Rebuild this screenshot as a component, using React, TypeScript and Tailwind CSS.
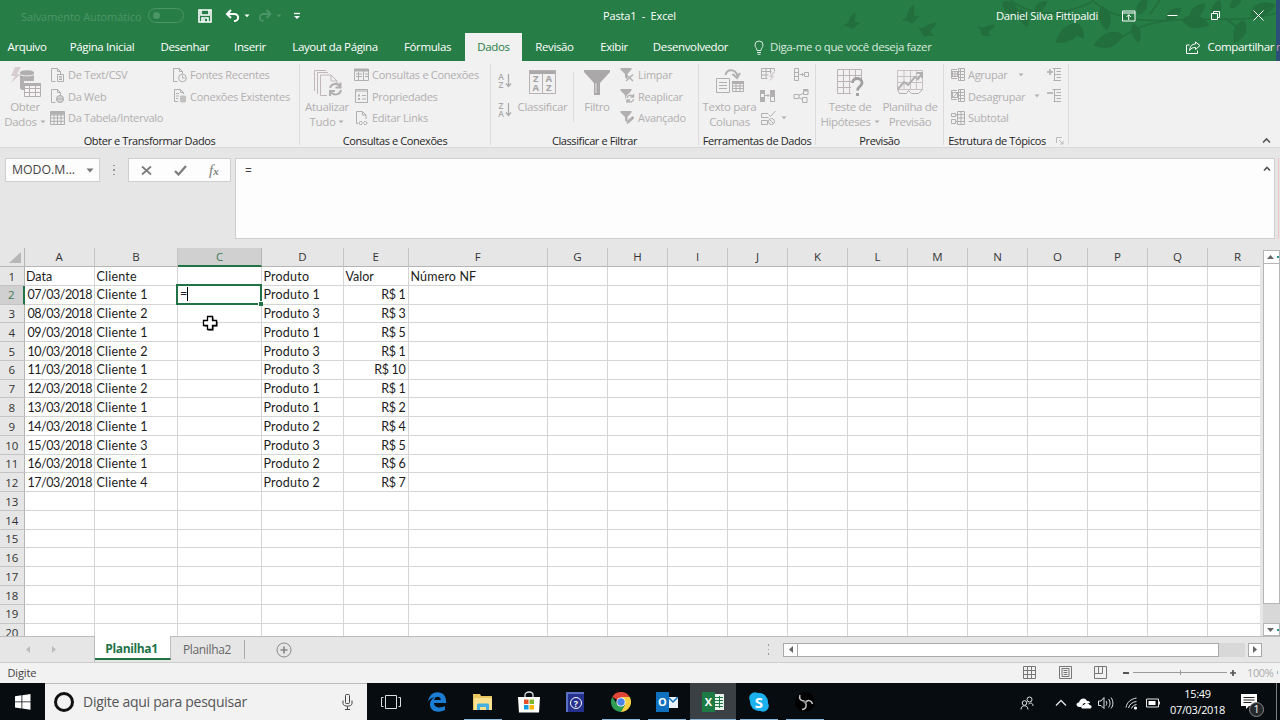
import React from 'react';
import clsx from 'clsx';

const TABS = [
  { label: 'Arquivo', width: 'w-[54px]' },
  { label: 'Página Inicial', width: 'w-[96px]' },
  { label: 'Desenhar', width: 'w-[70px]' },
  { label: 'Inserir', width: 'w-[60px]' },
  { label: 'Layout da Página', width: 'w-[110px]' },
  { label: 'Fórmulas', width: 'w-[75px]' },
  { label: 'Dados', width: 'w-[57px]', active: true },
  { label: 'Revisão', width: 'w-[65px]' },
  { label: 'Exibir', width: 'w-[54px]' },
  { label: 'Desenvolvedor', width: 'w-[99px]' },
];

const COLUMNS = [
  { name: 'A', width: 70.5 },
  { name: 'B', width: 83 },
  { name: 'C', width: 84 },
  { name: 'D', width: 82 },
  { name: 'E', width: 64.5 },
  { name: 'F', width: 139.5 },
  ...['G', 'H', 'I', 'J', 'K', 'L', 'M', 'N', 'O', 'P', 'Q'].map((name) => ({ name, width: 60 })),
  { name: 'R', width: 60 },
];

const DATA: string[][] = [
  ['Data', 'Cliente', '', 'Produto', 'Valor', 'Número NF'],
  ['07/03/2018', 'Cliente 1', '=', 'Produto 1', 'R$ 1'],
  ['08/03/2018', 'Cliente 2', '', 'Produto 3', 'R$ 3'],
  ['09/03/2018', 'Cliente 1', '', 'Produto 1', 'R$ 5'],
  ['10/03/2018', 'Cliente 2', '', 'Produto 3', 'R$ 1'],
  ['11/03/2018', 'Cliente 1', '', 'Produto 3', 'R$ 10'],
  ['12/03/2018', 'Cliente 2', '', 'Produto 1', 'R$ 1'],
  ['13/03/2018', 'Cliente 1', '', 'Produto 1', 'R$ 2'],
  ['14/03/2018', 'Cliente 1', '', 'Produto 2', 'R$ 4'],
  ['15/03/2018', 'Cliente 3', '', 'Produto 3', 'R$ 5'],
  ['16/03/2018', 'Cliente 1', '', 'Produto 2', 'R$ 6'],
  ['17/03/2018', 'Cliente 4', '', 'Produto 2', 'R$ 7'],
];

const ROWS = Array.from({ length: 20 }, (_, i) => i);

interface IconProps {
  w?: number;
  h?: number;
  className?: string;
  children: React.ReactNode;
}

function Icon({ w = 16, h = 16, className, children }: IconProps) {
  return (
    <svg
      width={w}
      height={h}
      viewBox={`0 0 ${w} ${h}`}
      fill="none"
      stroke="currentColor"
      strokeWidth="1"
      className={clsx('shrink-0', className)}
    >
      {children}
    </svg>
  );
}

function Caret({ className }: { className?: string }) {
  return (
    <Icon w={6} h={4} className={className}>
      <path d="M.5 .5h5L3 3.2z" fill="currentColor" stroke="none" />
    </Icon>
  );
}

/* ---------- small ribbon icons ---------- */

const page = 'M5.5 14.5H1.5V1.5h6l3 3V7M7.5 1.5v3h3';

const CsvIcon = () => (
  <Icon>
    <path d={page} />
    <path d="M7.5 7.5h6v7h-6zM9 9.5h3M9 11h3M9 12.5h3" />
  </Icon>
);
const WebIcon = () => (
  <Icon>
    <path d={page} />
    <circle cx="10" cy="11" r="3.6" />
    <path d="M6.5 11h7M10 7.5v7M8.3 8c-.8 2-.8 4 0 6M11.7 8c.8 2 .8 4 0 6" />
  </Icon>
);
const TableIcon = () => (
  <Icon>
    <path d="M.5 1.5h14v13H.5zM.5 5h14M.5 8h14M.5 11.3h14M4 4v10.5M7.5 4v10.5M11 4v10.5" />
    <path d="M.5 2h14v2H.5z" fill="currentColor" />
  </Icon>
);
const RecentIcon = () => (
  <Icon>
    <path d={page} />
    <circle cx="10.5" cy="11" r="3.8" />
    <path d="M10.5 8.5V11h2.2" />
  </Icon>
);
const ConnectionsIcon = () => (
  <Icon>
    <path d="M6 13.5H2.5v-12h6l3 3V6M8.5 1.5v3h3M4 5.5h3M4 8h3M4 10.5h2" />
    <path d="M8 8.5c0-1.3 6-1.3 6 0v5c0 1.3-6 1.3-6 0z" fill="currentColor" stroke="none" opacity=".75" />
  </Icon>
);
const QueriesIcon = () => (
  <Icon>
    <path d="M.5 2.5h14v11H.5zM9.5 4v9.5M2 7h6M2 9.5h6M4.5 5v8M11 7h3M11 9.5h3" />
    <path d="M.5 2h14v2H.5z" fill="currentColor" />
  </Icon>
);
const PropsIcon = () => (
  <Icon>
    <path d="M1.5 1.5h12v13h-12zM1.5 3h12M8 7.5h4M8 11h4" />
    <path d="M4 6.5h2v2H4zM4 10h2v2H4z" fill="currentColor" stroke="none" />
  </Icon>
);
const LinksIcon = () => (
  <Icon>
    <path d="M4 13.5H2.5v-12h6l3.5 3.5V9M8.5 1.5v3.5H12" />
    <path d="M8 11.5H6.5a1.5 1.5 0 0 0 0 3H8M10 14.5h1.5a1.5 1.5 0 0 0 0-3H10M7.5 13h3" />
  </Icon>
);

const smallFunnel = <path d="M.5 1h11v1.5L7.5 7v5.5L5 10.5V7L.5 2.5z" fill="currentColor" stroke="none" />;

const ClearIcon = () => (
  <Icon>
    {smallFunnel}
    <path d="M6 7.5l7 6.5M13 7.5L6 14" strokeWidth="1.4" />
  </Icon>
);
const ReapplyIcon = () => (
  <Icon>
    {smallFunnel}
    <circle cx="10.3" cy="10.5" r="4.7" fill="#f1f1f1" stroke="none" />
    <path d="M7 10a3.4 3.4 0 0 1 6-1.5M13.5 6v3h-3M13.6 11a3.4 3.4 0 0 1-6 1.8M7 15v-3h3" strokeWidth="1.3" />
  </Icon>
);
const AdvancedIcon = () => (
  <Icon>
    {smallFunnel}
    <path d="M7 13.5l1-3 4.5-4 1.5 1.5-4.5 4z" fill="currentColor" />
  </Icon>
);

const SortIcon = ({ desc = false }: { desc?: boolean }) => (
  <div className="flex items-center text-[#a9a7a7]">
    <div className="flex w-[7px] flex-col text-center text-[8.5px] leading-[8px] font-semibold">
      <span>{desc ? 'Z' : 'A'}</span>
      <span>{desc ? 'A' : 'Z'}</span>
    </div>
    <Icon w={7} h={14}>
      <path d="M3.5 0v12M1 9.5l2.5 3 2.5-3" strokeWidth="1.2" />
    </Icon>
  </div>
);

const FlashFillIcon = () => (
  <Icon>
    <path d="M1.5 1.5h13v3M1.5 1.5v10h6M1.5 4.5h10M1.5 8h7M6 1.5v10M10.5 1.5v5" />
    <path d="M13 5l-4 5h2.5L9 15l5.5-6H12l3-4z" fill="#d2cdcf" stroke="none" />
  </Icon>
);
const DuplicatesIcon = () => (
  <Icon>
    <path d="M.5 2.5h4v11h-4zM10.5 2.5h4v11h-4z" />
    <path d="M.5 2.5h4v3h-4zM.5 9.5h4v4h-4zM10.5 2.5h4v6h-4z" fill="currentColor" />
    <path d="M5 7.5h4M7.5 6L9 7.5 7.5 9" />
  </Icon>
);
const ValidationIcon = () => (
  <Icon>
    <path d="M8 3.5H1.5v4h7M1.5 10.5h6v4h-6zM8.5 4.5l2 2 5-5.5" />
    <circle cx="11.5" cy="11.5" r="3" />
    <path d="M9.5 9.5l4 4" />
  </Icon>
);
const ConsolidateIcon = () => (
  <Icon>
    <path d="M1.5 1.5h4v12h-4zM1.5 5.5h4M1.5 9.5h4M11.5 5.5h4v4h-4zM6.5 7.5h4M9 6l1.5 1.5L9 9" />
  </Icon>
);
const RelationsIcon = () => (
  <Icon>
    <path d="M1 6.5h5v4H1zM10.5 1.5h4.5v5h-4.5zM9.5 9.5H14v5H9.5zM6 7.5l4.5-2.5M6 9.5l3.5 2" />
    <path d="M10.5 2.5H15" strokeWidth="1.8" />
  </Icon>
);

const GroupIcon = ({ cut = false }: { cut?: boolean }) => (
  <Icon>
    <path d="M8.5 1.5h6v12h-6zM8.5 4.5h6M8.5 7.5h6M8.5 10.5h6M10.5 1.5v12M7 2.5H1.5v9H7" />
    {cut ? <path d="M2.5 10l6-6.5" /> : <path d="M3 7h4M5 5v4" />}
    <rect x="2.5" y="4.5" width="5" height="5" />
  </Icon>
);
const SubtotalIcon = () => (
  <Icon>
    <path d="M7.5 1.5h7v13h-7zM7.5 4.5h7M7.5 8h7M7.5 11.5h7M11 1.5v13M1.5 3.5h4v3h-4zM1.5 9.5h4v4h-4zM5.5 5h2M5.5 11.5h2" />
  </Icon>
);
const DetailIcon = ({ minus = false }: { minus?: boolean }) => (
  <Icon>
    <path d="M7.5 2v11M5.5 1.5H14M9.5 4.5H14M7.5 7.5H14M9.5 10.5H14M6.5 13.5H14" />
    <path d="M0 5h6" strokeWidth="1.6" />
    {!minus && <path d="M3 2v6" strokeWidth="1.6" />}
  </Icon>
);

/* ---------- large ribbon icons ---------- */

const GetDataIcon = () => (
  <Icon w={32} h={32}>
    <path d="M6 1h6L8 8h4L2 17l4-7H2z" fill="#d8cdd0" stroke="none" />
    <path d="M11 6.5c0-3 14-3 14 0V15H15v9c-2 0-4-.6-4-2z" fill="currentColor" stroke="none" />
    <path d="M11 8.5c2 1.8 12 1.8 14 0" stroke="#f1f1f1" />
    <path d="M15.5 17.5h16v13h-16zM15.5 22.5h16M15.5 26.5h16M20.5 18v12.5M26.5 18v12.5" fill="#f7f3f5" />
    <path d="M15 17h17v3H15z" fill="currentColor" stroke="none" />
  </Icon>
);
const RefreshAllIcon = () => (
  <Icon w={32} h={32}>
    <path d="M3.5 25V4.5H15M6.5 28V6.5H17M16 29.5H9.5V9H20l6 6v3M20 9v6h6" stroke="#c2b8bb" />
    <path d="M19 22a5.5 5.5 0 0 1 10-1.5M29.5 16.5v5h-5M30 24a5.5 5.5 0 0 1-10 2M19 30v-5h5" strokeWidth="2" />
  </Icon>
);
const SortDialogIcon = () => (
  <div className="flex h-[24px] w-[27px] flex-col border border-[#b9b1b3] text-[#a5a3a4]">
    <div className="h-[3px] bg-[#aaa8a9]" />
    <div className="grid grow grid-cols-2 divide-x divide-[#b9b1b3] text-center text-[9.5px] leading-[9.5px] font-bold">
      <span>
        Z<br />A
      </span>
      <span>
        A<br />Z
      </span>
    </div>
  </div>
);
const FunnelIcon = () => (
  <Icon w={28} h={28}>
    <path d="M1 2h26v2L17 15v12h-6V15L1 4z" fill="#aaa8a8" stroke="none" />
    <path d="M13 15v10" stroke="#e6e4e4" />
  </Icon>
);
const TextColumnsIcon = () => (
  <Icon w={30} h={28}>
    <path d="M1.5 10.5h13v14h-13zM4 14.5h8M4 17.5h8M4 20.5h8" />
    <path d="M17.5 13.5h11v10h-11zM17.5 18h11M17.5 20.5h11M21 16v7M25 16v7" />
    <path d="M17 13h12v3H17z" fill="currentColor" stroke="none" />
    <path d="M10.5 7c1-6 10-7 12 1M17.5 6l4.5 4 3-5" strokeWidth="2" />
  </Icon>
);
const WhatIfIcon = () => (
  <Icon w={28} h={30}>
    <path
      d="M1.5 2.5h24v24h-24zM1.5 8.5h24M1.5 14.5h24M1.5 20.5h24M7.5 2.5v24M13.5 2.5v24M19.5 2.5v24"
      stroke="#bcb4b6"
    />
    <path d="M15 13h13v16H15z" fill="#f1f1f1" stroke="none" />
    <path d="M16.5 16c0-6 9.5-6 9.5 0 0 3.5-4.5 3.5-4.5 7.5M21.5 26v3" strokeWidth="2.8" stroke="#a19fa0" />
  </Icon>
);
const ForecastIcon = () => (
  <Icon w={28} h={28}>
    <path d="M1.5 2.5h25v19h-25zM1.5 8.5h25M1.5 14.5h25M8 2.5v19M14.5 2.5v19M20.5 2.5v19" stroke="#c9c0c3" />
    <path d="M2 21l6-7 4 3 7-8 3 2 4-6M21 5h5v5" strokeWidth="2" />
    <path d="M1.5 21.5l2 4h7l2-3 3 3h7l4-4" />
  </Icon>
);

/* ---------- ribbon pieces ---------- */

function RibbonGroup({
  label,
  className,
  launcher,
  children,
}: {
  label: string;
  className: string;
  launcher?: boolean;
  children: React.ReactNode;
}) {
  return (
    <div className={clsx('flex shrink-0 pt-[3px]', className)}>
      <div className="flex min-w-0 grow flex-col">
        <div className="flex h-[69px]">{children}</div>
        <div className="flex h-[14px] items-end justify-center text-[11px] leading-[13px] tracking-[-0.4px] whitespace-nowrap text-[#262626]">
          <span>{label}</span>
          {launcher && (
            <Icon w={8} h={8} className="mb-[2px] ml-2.5 text-[#bbb]">
              <path d="M.5 6V.5H6M3 3l4 4M7 4v3H4" />
            </Icon>
          )}
        </div>
      </div>
      <div className="mb-[2px] w-px bg-[#dcdada]" />
    </div>
  );
}

function BigButton({
  icon,
  lines,
  caret,
  className,
}: {
  icon: React.ReactNode;
  lines: string[];
  caret?: boolean;
  className: string;
}) {
  return (
    <div className={clsx('flex shrink-0 flex-col items-center', className)}>
      <div className="flex h-[35px] items-center justify-center">{icon}</div>
      {lines.map((line, i) => (
        <div
          key={line}
          className="flex h-[15px] items-center gap-[3px] text-[11.5px] leading-none tracking-[-0.35px] whitespace-nowrap"
        >
          {line}
          {caret && i === lines.length - 1 && <Caret />}
        </div>
      ))}
    </div>
  );
}

function SmallButton({ icon, label, caret }: { icon: React.ReactNode; label?: string; caret?: string }) {
  return (
    <div className="flex h-[21.5px] items-center gap-[2px] text-[11px] leading-none tracking-[-0.28px] whitespace-nowrap">
      {icon}
      {label}
      {caret !== undefined && <Caret className={caret} />}
    </div>
  );
}

function Ribbon() {
  return (
    <div className="flex h-[87px] shrink-0 border-b border-[#d8d8d8] bg-[#f1f1f1] text-[#b1afb0]">
      <RibbonGroup label="Obter e Transformar Dados" className="w-[300px]">
        <BigButton className="w-[50px]" icon={<GetDataIcon />} lines={['Obter', 'Dados']} caret />
        <div className="w-[122px]">
          <SmallButton icon={<CsvIcon />} label="De Text/CSV" />
          <SmallButton icon={<WebIcon />} label="Da Web" />
          <SmallButton icon={<TableIcon />} label="Da Tabela/Intervalo" />
        </div>
        <div>
          <SmallButton icon={<RecentIcon />} label="Fontes Recentes" />
          <SmallButton icon={<ConnectionsIcon />} label="Conexões Existentes" />
        </div>
      </RibbonGroup>

      <RibbonGroup label="Consultas e Conexões" className="w-[191px]">
        <BigButton className="w-[54px]" icon={<RefreshAllIcon />} lines={['Atualizar', 'Tudo']} caret />
        <div>
          <SmallButton icon={<QueriesIcon />} label="Consultas e Conexões" />
          <SmallButton icon={<PropsIcon />} label="Propriedades" />
          <SmallButton icon={<LinksIcon />} label="Editar Links" />
        </div>
      </RibbonGroup>

      <RibbonGroup label="Classificar e Filtrar" className="w-[208px]">
        <div className="flex w-[27px] flex-col items-center gap-[13px] pt-[9px]">
          <SortIcon />
          <SortIcon desc />
        </div>
        <BigButton className="w-[49px]" icon={<SortDialogIcon />} lines={['Classificar']} />
        <div className="mt-2 ml-[6px] h-[50px] w-px bg-[#dcdada]" />
        <BigButton className="w-[46px]" icon={<FunnelIcon />} lines={['Filtro']} />
        <div>
          <SmallButton icon={<ClearIcon />} label="Limpar" />
          <SmallButton icon={<ReapplyIcon />} label="Reaplicar" />
          <SmallButton icon={<AdvancedIcon />} label="Avançado" />
        </div>
      </RibbonGroup>

      <RibbonGroup label="Ferramentas de Dados" className="w-[117px]">
        <BigButton className="w-[61px]" icon={<TextColumnsIcon />} lines={['Texto para', 'Colunas']} />
        <div className="w-[33px]">
          <SmallButton icon={<FlashFillIcon />} />
          <SmallButton icon={<DuplicatesIcon />} />
          <SmallButton icon={<ValidationIcon />} caret="ml-[3px]" />
        </div>
        <div>
          <SmallButton icon={<ConsolidateIcon />} />
          <SmallButton icon={<RelationsIcon />} />
        </div>
      </RibbonGroup>

      <RibbonGroup label="Previsão" className="w-[128px]">
        <BigButton className="w-[68px]" icon={<WhatIfIcon />} lines={['Teste de', 'Hipóteses']} caret />
        <BigButton className="w-[52px]" icon={<ForecastIcon />} lines={['Planilha de', 'Previsão']} />
      </RibbonGroup>

      <RibbonGroup label="Estrutura de Tópicos" className="w-[125px]" launcher>
        <div className="w-[97px] pl-[6px]">
          <SmallButton icon={<GroupIcon />} label="Agrupar" caret="ml-2" />
          <SmallButton icon={<GroupIcon cut />} label="Desagrupar" caret="ml-[7px]" />
          <SmallButton icon={<SubtotalIcon />} label="Subtotal" />
        </div>
        <div className="pl-1.5">
          <SmallButton icon={<DetailIcon />} />
          <SmallButton icon={<DetailIcon minus />} />
        </div>
      </RibbonGroup>

      <div className="flex grow items-end justify-end pr-[9px] pb-[3px] text-[#555]">
        <Icon w={9} h={7}>
          <path d="M1 5.5l3.5-3.5L8 5.5" strokeWidth="1.6" />
        </Icon>
      </div>
    </div>
  );
}

/* ---------- title bar ---------- */

function Leaf({ x, y, r, s = 1 }: { x: number; y: number; r: number; s?: number }) {
  return <path transform={`translate(${x} ${y}) rotate(${r}) scale(${s})`} d="M0 0C6-10 18-10 28-1 18 7 7 8 0 0z" />;
}

function Bird({ x, y, r, s = 1 }: { x: number; y: number; r: number; s?: number }) {
  return (
    <path
      transform={`translate(${x} ${y}) rotate(${r}) scale(${s})`}
      d="M-8 2C-4 1-3 0-2-3-1-6 1-9 4-11 5-7 4-4 4-1L9 0 5 3C3 7 0 6-2 4z"
    />
  );
}

function Foliage() {
  return (
    <svg className="absolute top-0 right-0" width="450" height="61" viewBox="0 0 450 61" fill="#226f3d">
      <Bird x={21} y={23} r={0} />
      <Bird x={80} y={17} r={-5} s={1.1} />
      <Bird x={96} y={30} r={35} s={1.1} />
      <Bird x={155} y={30} r={45} />
      <path
        d="M180 0C210 22 240 12 262 2M262 0c18 18 50 22 80 20 40-3 70 4 108-8M345 20c-25 2-35 6-55 18M395 18l18 14M320 14l10-14"
        fill="none"
        stroke="#226f3d"
        strokeWidth="1.6"
      />
      <Leaf x={172} y={2} r={40} s={0.8} />
      <Leaf x={190} y={9} r={70} s={0.7} />
      <Leaf x={205} y={12} r={-40} s={0.6} />
      <Leaf x={225} y={12} r={20} s={0.7} />
      <Leaf x={250} y={24} r={145} s={1.1} />
      <Leaf x={242} y={23} r={55} s={0.7} />
      <Leaf x={272} y={6} r={80} s={0.9} />
      <Leaf x={292} y={34} r={160} s={1.1} />
      <Leaf x={303} y={24} r={75} s={0.7} />
      <Leaf x={308} y={15} r={-60} s={0.7} />
      <Leaf x={336} y={20} r={-35} s={0.7} />
      <Leaf x={360} y={20} r={-45} s={0.8} />
      <Leaf x={352} y={20} r={12} />
      <Leaf x={384} y={18} r={-70} s={0.7} />
      <Leaf x={414} y={20} r={115} s={0.9} />
      <Leaf x={420} y={15} r={-20} />
      <Leaf x={400} y={8} r={-40} s={0.6} />
    </svg>
  );
}

function TitleBar() {
  return (
    <header className="relative flex h-[61px] shrink-0 flex-col bg-[#277d46] text-white">
      <Foliage />
      <div className="relative flex h-[31px] items-center text-[11px] leading-none">
        <span className="w-[127px] pt-px pl-[21px] tracking-[-0.08px] whitespace-nowrap text-[#4c9566]">
          Salvamento Automático
        </span>
        <div className="ml-[21px] flex h-[15px] w-[36px] items-center rounded-full border border-[#4c9566] pl-1">
          <div className="size-[7px] rounded-full bg-[#4c9566]" />
        </div>
        <Icon w={14} h={14} className="ml-[14px]">
          <path d="M1 1h12v12H1zM3 1v5h8V1M4 13V9h6v4M6 10v3" strokeWidth="1.6" />
        </Icon>
        <Icon w={16} h={14} className="ml-[13px]">
          <path d="M6 1L2 5l4 4M2 5h7c6 0 5 7 0 7" strokeWidth="2" />
        </Icon>
        <Caret className="ml-[3px]" />
        <Icon w={14} h={14} className="ml-[8px] text-[#4c9566]">
          <path d="M8.5 1l4 4-4 4M12 5H6C0 5 1 12 5.5 12" strokeWidth="1.8" />
        </Icon>
        <Caret className="ml-1 text-[#4c9566]" />
        <Icon w={8} h={8} className="ml-[11px]">
          <path d="M1 1.5h6" strokeWidth="1.3" />
          <path d="M1 4h6L4 7z" fill="currentColor" stroke="none" />
        </Icon>
        <span className="ml-[302px] text-[11px] tracking-[-0.15px] whitespace-pre">{'Pasta1  -  Excel'}</span>
        <div className="grow" />
        <span className="text-[11.3px] tracking-[-0.28px]">Daniel Silva Fittipaldi</span>
        <Icon w={14} h={12} className="ml-[24px]">
          <path d="M.5 1h12.5v10H.5zM.5 3h12.5M6.7 10V5M4.5 7l2.2-2.3L9 7" />
        </Icon>
        <Icon w={11} h={11} className="ml-[31px]">
          <path d="M.5 5.5h10" />
        </Icon>
        <Icon w={11} h={11} className="ml-[32px]">
          <path d="M1.5 3.5h6v6h-6zM3.5 3.5v-2h6v6h-2" />
        </Icon>
        <Icon w={11} h={11} className="mr-[16px] ml-[32px]">
          <path d="M.5 .5l10 10M10.5 .5l-10 10" />
        </Icon>
      </div>
      <nav className="relative mt-[2px] flex h-[28px] text-[11.5px] leading-none tracking-[-0.38px]">
        {TABS.map((tab) => (
          <div
            key={tab.label}
            className={clsx(
              'flex shrink-0 items-center justify-center whitespace-nowrap',
              tab.width,
              tab.active && 'bg-[#f1f1f1] text-[#277d46]',
            )}
          >
            {tab.label}
          </div>
        ))}
        <div className="flex items-center gap-[6px] pl-[14px] text-[#d8ebdf]">
          <Icon w={10} h={15}>
            <path d="M3 10.5C3 8 1 7.5 1 5a4 4 0 0 1 8 0c0 2.5-2 3-2 5.5zM3 12.5h4M3.5 14.3h3" />
          </Icon>
          <span>Diga-me o que você deseja fazer</span>
        </div>
        <div className="flex grow items-center justify-end gap-[7px] pr-[6px]">
          <Icon w={15} h={13}>
            <path d="M3.5 4H.5v8.5h11V9.5M14 4.5L9.5 1v2C5.5 3 4 6 3.5 9.5 5 7 7 6.5 9.5 6.5v2z" />
          </Icon>
          <span>Compartilhar</span>
        </div>
      </nav>
      {/* sliver of the desktop showing past the window edge */}
      <div className="absolute top-0 right-0 flex h-full w-[4px] items-end bg-[#2b4f78] pb-[9px] text-[11px] leading-none text-[#d99aa0]">
        r
      </div>
    </header>
  );
}

/* ---------- formula bar ---------- */

function FormulaBar() {
  return (
    <div className="flex h-[100px] shrink-0 items-start bg-[#e6e6e6] pt-[10px] pl-[5px] text-[#444]">
      <div className="flex h-[24px] w-[95px] items-center justify-between border border-[#cfcfcf] bg-[#fdfdfd] pr-[5px] pl-[6px] text-[12.3px]">
        <span>MODO.M...</span>
        <Icon w={8} h={5} className="text-[#777]">
          <path d="M.5 .5h7L4 4.5z" fill="currentColor" stroke="none" />
        </Icon>
      </div>
      <div className="flex h-[24px] w-[28px] flex-col items-center justify-center gap-[3px]">
        <span className="size-[1.5px] bg-[#999]" />
        <span className="size-[1.5px] bg-[#999]" />
        <span className="size-[1.5px] bg-[#999]" />
      </div>
      <div className="flex h-[24px] w-[103px] items-center border border-[#cfcfcf] bg-[#fdfdfd] pl-[12px] text-[#7c7c7c]">
        <Icon w={11} h={11}>
          <path d="M1 1.5l9 8M10 1.5l-9 8" strokeWidth="1.7" />
        </Icon>
        <Icon w={13} h={11} className="ml-[22px]">
          <path d="M1 6l3.5 3.5L12 1" strokeWidth="2.2" />
        </Icon>
        <span className="ml-[22px] font-['Liberation_Serif',serif] text-[15px] leading-none italic">
          f<span className="text-[11px] font-bold">x</span>
        </span>
      </div>
      <div className="ml-[4px] flex h-[81px] w-[1040px] justify-between border border-[#cfcfcf] bg-[#fdfdfd] pt-[4px] pr-[3px] pl-[9px] text-[12px] leading-4">
        <span>=</span>
        <Icon w={8} h={7} className="mt-[2px] text-[#555]">
          <path d="M1 5.5l3-3 3 3" strokeWidth="1.7" />
        </Icon>
      </div>
      <div className="ml-[3px] h-[81px] w-px bg-[#f0c4c4]" />
    </div>
  );
}

/* ---------- grid ---------- */

function Cell({ row, col }: { row: number; col: number }) {
  const text = DATA[row]?.[col] ?? '';
  const editing = row === 1 && col === 2;

  return (
    <div
      className={clsx(
        'relative flex shrink-0 items-center border-r border-b border-[#d4d4d4] pt-[2px] pr-[2px] pl-[1.5px] whitespace-pre',
        row > 0 && col === 0 && 'justify-end tracking-[-0.48px]',
        row > 0 && col === 4 && 'justify-end tracking-[-0.3px]',
        (col === 1 || col === 3) && 'tracking-[0.2px]',
        col === 5 && 'pl-[2px] tracking-[0.15px]',
      )}
      style={{ width: COLUMNS[col].width }}
    >
      {!editing && text}
      {editing && (
        <div className="absolute -top-[2px] -right-[1px] -bottom-[1px] -left-[2px] z-10 flex items-center border-2 border-[#217346] bg-white pl-[2px]">
          {text}
          <span className="h-[14px] w-px bg-black" />
          <span className="absolute -right-[3px] -bottom-[3px] size-[5px] border-t border-l border-white bg-[#217346]" />
        </div>
      )}
    </div>
  );
}

function Grid() {
  return (
    <div className="flex h-[388px] shrink-0 bg-[#e6e6e6]">
      <div className="relative flex w-[1260px] flex-col overflow-hidden">
        <div className="flex h-[19px] shrink-0 text-[11.5px] leading-none text-[#333]">
          <div className="flex w-[24.5px] shrink-0 items-end justify-end border-r border-b border-[#b5b5b5] pr-[3px] pb-[3px]">
            <Icon w={12} h={11}>
              <path d="M12 0v11H0z" fill="#b7b7b7" stroke="none" />
            </Icon>
          </div>
          {COLUMNS.map((col) => (
            <div
              key={col.name}
              className={clsx(
                'flex shrink-0 items-center justify-center border-r',
                col.name === 'C'
                  ? 'border-r-[#b5b5b5] border-b-2 border-b-[#217346] bg-[#d0d0d0] pt-px text-[#3f7a57]'
                  : 'border-b border-r-[#c4c4c4] border-b-[#b5b5b5]',
              )}
              style={{ width: col.width }}
            >
              {col.name}
            </div>
          ))}
        </div>
        {ROWS.map((row) => (
          <div key={row} className="flex h-[18.77px] shrink-0 text-[12.5px] leading-none text-[#1c1c1c]">
            <div
              className={clsx(
                "flex w-[24.5px] shrink-0 items-center justify-center border-b border-b-[#c4c4c4] pt-px font-['Open_Sans',sans-serif] text-[11.5px]",
                row === 1
                  ? 'border-r-2 border-r-[#217346] bg-[#d0d0d0] text-[#3f7a57]'
                  : 'border-r border-r-[#b5b5b5] bg-[#e6e6e6] text-[#333]',
              )}
            >
              {row + 1}
            </div>
            <div className="flex shrink-0 bg-white font-['Lato',sans-serif]">
              {COLUMNS.map((col, i) => (
                <Cell key={col.name} row={row} col={i} />
              ))}
            </div>
          </div>
        ))}
        {/* mouse cursor */}
        <svg className="absolute top-[67px] left-[202px] z-20" width="16" height="16" viewBox="0 0 16 16">
          <path d="M6.5 2.5h5v4h4v5h-4v4h-5v-4h-4v-5h4z" fill="#000" />
          <path d="M5.5 1.5h5v4h4v5h-4v4h-5v-4h-4v-5h4z" fill="#fff" stroke="#000" strokeWidth="1.3" />
        </svg>
      </div>
      <div className="flex w-[20px] flex-col pt-[2px] pl-[3px]">
        <div className="flex h-[14px] items-center gap-[3px] border border-[#b5b5b5] bg-white pl-[3px] text-[#666]">
          <Icon w={7} h={4}>
            <path d="M0 4l3.5-4L7 4z" fill="currentColor" stroke="none" />
          </Icon>
          <span className="h-[2px] w-[2px] bg-[#2d8f8f]" />
        </div>
        <div className="h-[340px] border-x border-b border-[#b5b5b5] bg-white" />
        <div className="grow bg-[#d8d8d8]" />
        <div className="flex h-[13px] items-center gap-[3px] border border-[#b5b5b5] bg-white pl-[3px] text-[#666]">
          <Icon w={7} h={4}>
            <path d="M0 0h7L3.5 4z" fill="currentColor" stroke="none" />
          </Icon>
          <span className="h-[2px] w-[2px] bg-[#2d8f8f]" />
        </div>
      </div>
    </div>
  );
}

/* ---------- sheet tabs and status bar ---------- */

function SheetTabs() {
  return (
    <div className="flex h-[27px] shrink-0 items-start border-b border-[#cdcdcd] bg-[#e6e6e6] text-[12px] leading-none tracking-[-0.35px] text-[#666]">
      <div className="flex h-[26px] w-[94.5px] items-center border-t border-r border-[#bdbdbd] pl-[26px] text-[#bcbcbc]">
        <Icon w={4} h={7}>
          <path d="M4 0v7L0 3.5z" fill="currentColor" stroke="none" />
        </Icon>
        <Icon w={4} h={7} className="ml-[22px]">
          <path d="M0 0v7l4-3.5z" fill="currentColor" stroke="none" />
        </Icon>
      </div>
      <div className="flex h-[24px] w-[76px] items-center justify-center border-r border-b-2 border-r-[#bdbdbd] border-b-[#217346] bg-white pt-[3px] pr-px text-[12px] font-bold text-[#217346]">
        Planilha1
      </div>
      <div className="flex h-[26px] grow items-center border-t border-[#bdbdbd]">
        <div className="flex h-[19px] w-[74px] items-center justify-center border-r border-[#aaa]">Planilha2</div>
        <Icon w={16} h={16} className="ml-[31px] text-[#888]">
          <circle cx="8" cy="8" r="7" />
          <path d="M8 4.5v7M4.5 8h7" strokeWidth="1.7" />
        </Icon>
        <div className="grow" />
        <div className="mr-[14px] flex flex-col gap-[3px]">
          <span className="size-[1.5px] bg-[#999]" />
          <span className="size-[1.5px] bg-[#999]" />
          <span className="size-[1.5px] bg-[#999]" />
        </div>
        <div className="mr-[18px] flex h-[14px] w-[479px] bg-[#d8d8d8]">
          <div className="flex w-[15px] items-center justify-center border border-[#a9a9a9] bg-white">
            <Icon w={4} h={7}>
              <path d="M4 0v7L0 3.5z" fill="currentColor" stroke="none" />
            </Icon>
          </div>
          <div className="w-[421px] border border-l-0 border-[#a9a9a9] bg-white" />
          <div className="grow" />
          <div className="w-[3px] bg-[#e6e6e6]" />
          <div className="flex w-[14px] items-center justify-center border border-[#a9a9a9] bg-white">
            <Icon w={4} h={7}>
              <path d="M0 0v7l4-3.5z" fill="currentColor" stroke="none" />
            </Icon>
          </div>
        </div>
      </div>
    </div>
  );
}

function StatusBar() {
  return (
    <div className="flex h-[20px] shrink-0 items-center bg-[#f2f2f2] pb-px pl-[7.5px] text-[11px] leading-none text-[#444]">
      <span className="grow pb-px tracking-[-0.15px]">Digite</span>
      <Icon w={14} h={13} className="text-[#777]">
        <path d="M.5 .5h12v12H.5zM.5 4.5h12M.5 8.5h12M4.5 .5v12M8.5 .5v12" />
      </Icon>
      <Icon w={14} h={13} className="ml-[22px] text-[#777]">
        <path d="M.5 .5h12v12H.5zM3 2.5h7v8H3zM4.5 4.5h4M4.5 6.5h4M4.5 8.5h4" />
      </Icon>
      <Icon w={14} h={13} className="ml-[21px] text-[#777]">
        <path d="M.5 .5h12v12H.5zM4.5 .5v7M8.5 .5v7M.5 7.5h8" />
      </Icon>
      <span className="ml-[15px] h-[2px] w-[6px] bg-[#555]" />
      <div className="ml-[4px] flex h-[5px] w-[94px] items-center justify-center bg-[linear-gradient(#999,#999)] bg-[length:100%_1px] bg-center bg-no-repeat">
        <span className="h-[5px] w-px bg-[#999]" />
      </div>
      <Icon w={8} h={8} className="ml-[2px] text-[#555]">
        <path d="M4 1v6M1 4h6" strokeWidth="1.7" />
      </Icon>
      <span className="ml-[10px] w-[26px] tracking-[-0.4px] text-[#aaa]">100%</span>
      <span className="mr-[2px] ml-[4px] h-[3px] w-px bg-[#8fbccc]" />
    </div>
  );
}

/* ---------- taskbar ---------- */

const APPS = [
  {
    name: 'task-view',
    icon: (
      <Icon w={20} h={16} className="text-[#ddd]">
        <path d="M4.5 1.5h11v13h-11zM2.5 3.5h-2v9h2M17.5 3.5h2v9h-2" />
      </Icon>
    ),
  },
  {
    name: 'edge',
    icon: (
      <Icon w={20} h={20}>
        <path
          d="M1 9.5C2 3.5 6 .3 10.5 .3c5.5 0 9 4 8.7 10.7H7c.2 5 6.5 5.5 11 3v4C11 21.5 3 19.5 3 12.5 3 9 5 6.5 7.8 5.3 5 5.5 2.5 7 1 9.5zM7.2 8h6.6c0-4.5-6-4.5-6.6 0z"
          fill="#1b7ed4"
          stroke="none"
        />
      </Icon>
    ),
  },
  {
    name: 'explorer',
    open: true,
    icon: (
      <Icon w={20} h={18}>
        <path d="M0 1h7l1 2h11v14H0z" fill="#e9c760" stroke="none" />
        <path d="M1 5h18v12H1z" fill="#f8e08e" stroke="none" />
        <path d="M4 17v-5c0-1 .5-1.5 1.5-1.5h9c1 0 1.5.5 1.5 1.5v5h-3v-3H7v3z" fill="#45aee0" stroke="none" />
      </Icon>
    ),
  },
  {
    name: 'store',
    icon: (
      <Icon w={22} h={22}>
        <path d="M7 6V4c0-4 8-4 8 0v2" stroke="#ddd" strokeWidth="1.3" />
        <path d="M0 6h22l-1 15.5H1z" fill="#fff" stroke="none" />
        <path d="M6 8.5h4.5V13H6z" fill="#e84f26" stroke="none" />
        <path d="M11.5 8.5H16V13h-4.5z" fill="#7cb62b" stroke="none" />
        <path d="M6 14h4.5v4.5H6z" fill="#1a9be0" stroke="none" />
        <path d="M11.5 14H16v4.5h-4.5z" fill="#f6b400" stroke="none" />
      </Icon>
    ),
  },
  {
    name: 'help',
    icon: (
      <div className="flex h-[20px] w-[18px] items-center justify-center border-t-2 border-l-2 border-[#5b6fc0] bg-[#25318c]">
        <span className="flex size-[12px] items-center justify-center rounded-full border border-white text-[9px] leading-none font-bold text-white">
          ?
        </span>
      </div>
    ),
  },
  {
    name: 'chrome',
    open: true,
    icon: (
      <Icon w={20} h={20}>
        <path d="M10 10L1.3 5A10 10 0 0 1 18.7 5z" fill="#e04535" stroke="none" />
        <path d="M10 5h8.7a10 10 0 0 1-8.9 15l4.2-8z" fill="#f8cf41" stroke="none" />
        <path d="M1.3 5A10 10 0 0 0 9.8 20l4.2-7-8-1z" fill="#2f9e55" stroke="none" />
        <circle cx="10" cy="10" r="4.6" fill="#fff" stroke="none" />
        <circle cx="10" cy="10" r="3.7" fill="#4a83ea" stroke="none" />
      </Icon>
    ),
  },
  {
    name: 'outlook',
    open: true,
    icon: (
      <div className="flex items-center">
        <div className="flex h-[20px] w-[13px] items-center justify-center bg-[#1070bd] text-[11px] font-bold text-white">
          O
        </div>
        <Icon w={9} h={11}>
          <path d="M0 0h9v11H0z" fill="#e9f2fa" stroke="none" />
          <path d="M0 1l4 4 5-5" stroke="#1070bd" strokeWidth="1.5" />
        </Icon>
      </div>
    ),
  },
  {
    name: 'excel',
    open: true,
    active: true,
    icon: (
      <div className="flex items-center">
        <div className="flex h-[20px] w-[13px] items-center justify-center bg-[#1d7a45] text-[11px] font-bold text-white">
          X
        </div>
        <Icon w={9} h={16}>
          <path d="M0 0h9v16H0z" fill="#e8f3ec" stroke="none" />
          <path d="M0 3.5h8M0 6.5h8M0 9.5h8M0 12.5h8M4.5 2v12" stroke="#1d7a45" />
        </Icon>
      </div>
    ),
  },
  {
    name: 'skype',
    open: true,
    icon: (
      <div className="relative flex size-[20px] items-center justify-center">
        <Icon w={20} h={20} className="absolute text-[#1bb0ee]">
          <circle cx="6" cy="6" r="5.8" fill="currentColor" stroke="none" />
          <circle cx="14" cy="14" r="5.8" fill="currentColor" stroke="none" />
          <circle cx="10" cy="10" r="9" fill="currentColor" stroke="none" />
        </Icon>
        <span className="relative text-[15px] leading-none font-bold text-white">S</span>
      </div>
    ),
  },
  {
    name: 'obs',
    open: true,
    icon: (
      <Icon w={20} h={20}>
        <circle cx="10" cy="10" r="10" fill="#000" stroke="none" />
        <path
          d="M5 3c-1.5 4 1 6 4.5 6M17.5 12c-1-4-5-4.5-7-1.5M7 17.5c4 0 5-3.5 3.5-7"
          stroke="#c4c4c4"
          strokeWidth="1.5"
        />
        <circle cx="10" cy="10" r="1.5" fill="#888" stroke="none" />
      </Icon>
    ),
  },
];

function Taskbar() {
  return (
    <footer className="flex h-[37px] shrink-0 bg-[#060c10] text-white">
      <div className="flex w-[45px] shrink-0 items-center justify-center">
        <Icon w={16} h={16}>
          <path
            d="M0 2.2l6.5-.9v6.2H0zM7.3 1.2L15.5 0v7.5H7.3zM0 8.3h6.5v6.2L0 13.6zM7.3 8.3h8.2v7.5l-8.2-1.2z"
            fill="#fff"
            stroke="none"
          />
        </Icon>
      </div>
      <div className="mr-px flex w-[322px] shrink-0 items-center border-t border-[#bbb] bg-[#f2f2f2] pr-[14px] pl-[9px] text-[14px] text-[#555]">
        <span className="size-[20px] rounded-full border-[3px] border-[#111]" />
        <span className="grow pl-[9px] leading-none tracking-[-0.27px]">Digite aqui para pesquisar</span>
        <Icon w={11} h={16} className="text-[#444]">
          <rect x="3.5" y=".5" width="4" height="9" rx="1" />
          <path d="M1 6.5v3c0 3.5 9 3.5 9 0v-3M5.5 12.5v3M3 15.5h5" />
        </Icon>
      </div>
      {APPS.map((app) => (
        <div
          key={app.name}
          className={clsx('flex w-[46px] shrink-0 flex-col items-center', app.active && 'bg-[#3a4044]')}
        >
          <div className="flex h-[36px] items-center pt-[2px]">{app.icon}</div>
          {app.open && <div className={clsx('h-px bg-[#8ab8e0]', app.active ? 'w-full' : 'w-[38px]')} />}
        </div>
      ))}
      <div className="grow" />
      <div className="flex shrink-0 items-center pt-[3px] text-[#e4e4e4]">
        <Icon w={14} h={14} className="mr-px">
          <circle cx="9.5" cy="3.5" r="2.5" />
          <circle cx="4.5" cy="7" r="2.3" />
          <path d="M1 13.5c0-5 7-5 7 0M8.5 8c2.5-2 4.5-.5 4.5 2" />
        </Icon>
        <Icon w={12} h={8} className="ml-[20px]">
          <path d="M1 6.5l5-5 5 5" strokeWidth="1.3" />
        </Icon>
        <Icon w={16} h={11} className="ml-[9px]">
          <path d="M3 9C-1 8 .5 4 3 4.5 4-.5 10-.5 11 3c3 0 3 1.5 3 2H8L5 9z" fill="#fff" stroke="none" />
          <path d="M6 10.5c-2-2 0-4 2-3.5 1-3 5-2.5 5.5 0 3 0 2.5 3.5 0 3.5z" fill="#fff" stroke="none" />
        </Icon>
        <Icon w={16} h={14} className="ml-[6px]">
          <path d="M.5 5h2.5l3-3.5v11L3 9.5H.5zM8 5c1 1.5 1 3 0 4.5M10.5 3c2 2.5 2 6 0 8.5M13 1.5c2.5 3.5 2.5 8 0 11" />
        </Icon>
        <Icon w={14} h={14} className="ml-[10px]">
          <path d="M2 11.5C3 6 7 3 12.5 2M4.5 12c1-4 4-6 8-6.5M7.5 12.5c1-2.5 2.5-3.5 5-4" />
          <circle cx="11.5" cy="12" r="1.6" fill="#fff" stroke="none" />
        </Icon>
        <Icon w={15} h={10} className="ml-[8px]">
          <path d="M.5 1h12v8H.5zM13.5 3.5v3" />
          <path d="M2.5 3h7v4h-7z" fill="#fff" stroke="none" />
        </Icon>
      </div>
      <div className="flex w-[73px] shrink-0 flex-col items-center justify-center gap-[5px] text-[11px] leading-[11px] tracking-[-0.35px] whitespace-nowrap">
        <span>15:49</span>
        <span>07/03/2018</span>
      </div>
      <div className="relative ml-[7px] flex w-[35px] shrink-0 items-center">
        <Icon w={16} h={15}>
          <path d="M0 0h16v12H8l-3 3v-3H0z" fill="#fff" stroke="none" />
          <path d="M2.5 3.5h11M2.5 6h11M2.5 8.5h8" stroke="#222" />
        </Icon>
        <span className="absolute top-[19px] left-[8px] flex size-[15px] items-center justify-center rounded-full border border-[#888] bg-[#25292c] text-[10.5px] leading-none">
          1
        </span>
      </div>
      <div className="mr-[3px] w-px shrink-0 bg-[#7b8083]" />
    </footer>
  );
}

export default function App() {
  return (
    <div className="flex h-[720px] w-[1280px] flex-col overflow-hidden bg-[#e6e6e6] font-['Open_Sans',sans-serif] select-none">
      <TitleBar />
      <Ribbon />
      <FormulaBar />
      <Grid />
      <SheetTabs />
      <StatusBar />
      <Taskbar />
    </div>
  );
}
